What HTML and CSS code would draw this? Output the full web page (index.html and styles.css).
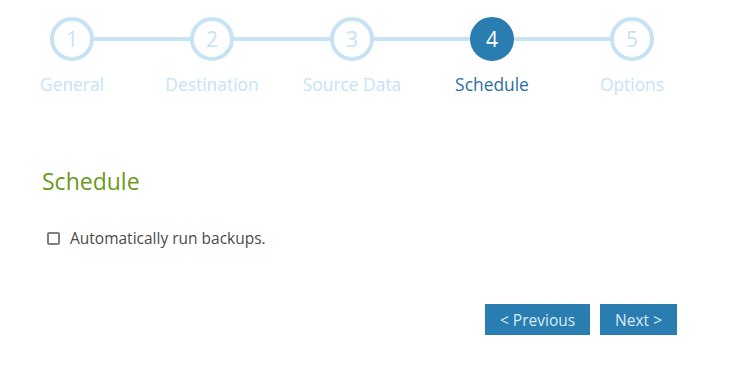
FILE: index.html
```html
<!DOCTYPE html>
<html>
<head>
<meta charset="utf-8">
<link rel="stylesheet" href="styles.css">
</head>
<body>
<div class="wizard">
  <ol class="steps">
    <li class="step"><span class="circle">1</span><span class="label">General</span></li>
    <li class="step"><span class="circle">2</span><span class="label">Destination</span></li>
    <li class="step"><span class="circle">3</span><span class="label">Source Data</span></li>
    <li class="step active"><span class="circle">4</span><span class="label">Schedule</span></li>
    <li class="step"><span class="circle">5</span><span class="label">Options</span></li>
  </ol>
  <section class="panel">
    <h2 class="title">Schedule</h2>
    <label class="check"><span class="box"></span>Automatically run backups.</label>
  </section>
  <div class="actions">
    <button class="btn">&lt; Previous</button>
    <button class="btn">Next &gt;</button>
  </div>
</div>
</body>
</html>
```
FILE: styles.css
```css
* { box-sizing: border-box; }
html, body { margin: 0; padding: 0; background: #fff; }
body { font-family: "Open Sans", "Noto Sans", sans-serif; }
.wizard { padding-top: 17px; }
.steps {
  list-style: none; margin: 0 0 0 2px; padding: 0;
  display: grid; grid-template-columns: repeat(5, 140px);
}
.step {
  position: relative;
  display: flex; flex-direction: column; align-items: center;
}
.step + .step::before {
  content: ""; position: absolute;
  left: -70px; width: 140px; top: 20px; height: 4px;
  background: #c6e3f6; z-index: 0;
}
.circle {
  position: relative; z-index: 1;
  width: 44px; height: 44px; border-radius: 50%;
  border: 4px solid #c6e3f6; background: #fff;
  color: #c6e3f6; font-size: 21px;
  display: flex; align-items: center; justify-content: center;
}
.label {
  margin-top: 12px; font-size: 17.4px; line-height: 22px;
  color: #c6e3f6;
}
.step.active .circle { background: #2a7db1; border-color: #2a7db1; color: #fff; }
.step.active .label { color: #2a6f9f; }
.panel { padding: 0 0 0 42px; margin-top: 72px; }
.title {
  margin: 0; font-weight: normal; font-size: 23px; line-height: 28px;
  color: #6a9a1a;
}
.check {
  display: flex; align-items: center;
  margin: 33px 0 0 5px; font-size: 15.5px; line-height: 20px; color: #4a4a4a;
}
.box {
  width: 13px; height: 13px; border: 2px solid #7d7d85; border-radius: 2px;
  margin-right: 10px; background: #fff;
}
.actions {
  display: flex; justify-content: flex-end; gap: 10px;
  margin-top: 56px; padding-right: 60px;
}
.btn {
  border: 0; border-radius: 0; background: #2a7db1; color: #d9ecf8;
  font-family: inherit; font-size: 15.5px; height: 31px; padding: 0 15px;
}
```
